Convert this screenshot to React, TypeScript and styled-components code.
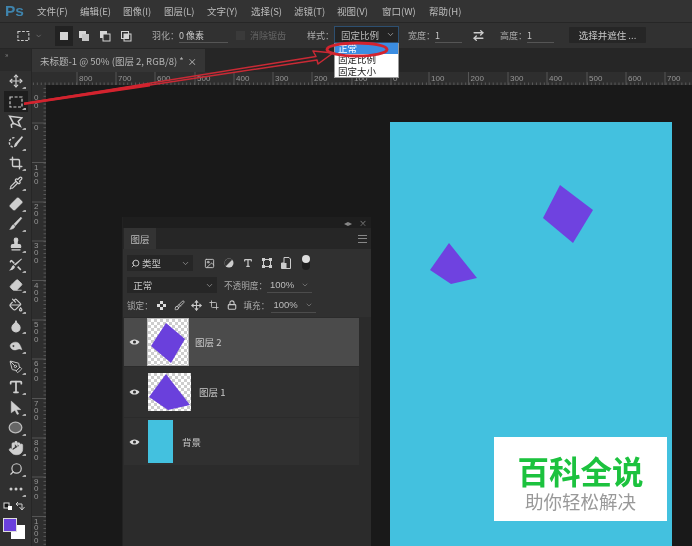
import React from "react";
import styled, { createGlobalStyle } from "styled-components";
import { Move, Crop, Pipette, Bandage, Brush, Stamp, Eraser, PaintBucket, Droplet, PenTool, Search, Hand, ChevronDown, Image, Type, Lock, ArrowRightLeft } from "lucide-react";

const Global = createGlobalStyle`
  html, body { margin: 0; padding: 0; background: #191919; }
  body { font-family: "Noto Sans CJK SC", "Liberation Sans", sans-serif; overflow: hidden; }
`;

const Page = styled.div`
  width: 692px; height: 546px; position: relative; overflow: hidden;
  display: flex; flex-direction: column; background: #191919; color: #c4c4c4; font-size: 10px;
  filter: blur(0.35px);
`;
const MenuBar = styled.div`
  height: 23px; flex: none; display: flex; align-items: center; background: #333; border-bottom: 1px solid #262626; box-sizing: border-box;
`;
const Logo = styled.div`
  width: 37px; padding-left: 5px; box-sizing: border-box; flex: none;
  font: bold 15.5px "Liberation Sans", sans-serif; color: #3f84ad;
`;
const MenuItem = styled.span<{ $w: number }>`
  width: ${p => p.$w}px; flex: none; font-size: 9.5px; color: #bdbdbd; white-space: nowrap;
`;
const Options = styled.div`
  height: 26px; flex: none; display: flex; align-items: center; background: #313131; border-bottom: 1px solid #262626; box-sizing: border-box; font-size: 9px;
`;
const OptIcon = styled.div<{ $w: number; $active?: boolean }>`
  width: ${p => p.$w}px; height: 20px; flex: none; display: flex; align-items: center; justify-content: center; gap: 5px;
  background: ${p => (p.$active ? "#222" : "transparent")};
`;
const OptLabel = styled.span<{ $w: number; $dim?: boolean }>`
  width: ${p => p.$w}px; flex: none; white-space: nowrap; color: ${p => (p.$dim ? "#666" : "#aaa")};
`;
const UnderValue = styled.span<{ $w: number }>`
  width: ${p => p.$w}px; flex: none; border-bottom: 1px solid #555; color: #c9c9c9; line-height: 13px; white-space: nowrap; box-sizing: border-box;
`;
const SelectBox = styled.div`
  width: 65px; height: 17px; flex: none; background: #232323; border: 1px solid #2d4f70; box-sizing: border-box; margin-top: -2px;
  display: flex; align-items: center; justify-content: space-between; padding: 0 3px 0 6px; color: #bbb; white-space: nowrap; font-size: 9.5px;
`;
const WideButton = styled.div`
  width: 77px; height: 16px; flex: none; background: #262626; display: flex; align-items: center; justify-content: center; color: #c8c8c8; border-radius: 1px; font-size: 9.5px; margin-top: -2px;
`;
const Gap = styled.div<{ $w: number }>` width: ${p => p.$w}px; flex: none; `;

const Main = styled.div` flex: 1; display: flex; min-height: 0; `;
const Tools = styled.div`
  width: 32px; flex: none; background: #303030; display: flex; flex-direction: column; align-items: center; border-right: 1px solid #262626; box-sizing: border-box;
`;
const Grip = styled.div`
  height: 22px; width: 100%; flex: none; font-size: 7px; line-height: 10px; color: #888; padding-left: 5px; box-sizing: border-box; letter-spacing: 1px; background: #2a2a2a;
`;
const Tool = styled.div<{ $active?: boolean }>`
  width: 24px; height: 20.4px; flex: none; display: flex; align-items: center; justify-content: center; position: relative; color: #cfcfcf;
  background: ${p => (p.$active ? "#1e1e1e" : "transparent")};
  &::after { content: ""; position: absolute; right: 2px; bottom: 2px; border-left: 2px solid transparent; border-bottom: 2px solid #aaa; border-right: 2px solid #aaa; }
`;
const ColorWell = styled.div` position: relative; width: 28px; height: 46px; flex: none; margin-top: 1px; margin-left: 1px; `;
const Fg = styled.div`
  position: absolute; left: 1px; top: 18px; width: 12px; height: 12px; background: #6a40dc; border: 1px solid #ddd; z-index: 1;
`;
const Bg = styled.div`
  position: absolute; left: 9px; top: 25px; width: 14px; height: 14px; background: #fff;
`;

const Work = styled.div` flex: 1; min-width: 0; display: flex; flex-direction: column; `;
const TabRow = styled.div` height: 23px; flex: none; background: #262626; display: flex; `;
const DocTab = styled.div`
  width: 173px; background: #353535; display: flex; align-items: center; justify-content: space-between; padding: 0 8px; box-sizing: border-box; color: #b5b5b5; font-size: 9.5px; white-space: nowrap;
`;
const RulerTop = styled.svg` height: 13px; width: 660px; flex: none; display: block; background: #2e2e2e; `;
const Body = styled.div` flex: 1; display: flex; min-height: 0; `;
const RulerLeft = styled.svg` width: 14px; flex: none; height: 461px; display: block; background: #2e2e2e; `;
const Canvas = styled.div` flex: 1; position: relative; background: #191919; overflow: hidden; `;
const Doc = styled.svg`
  position: absolute; left: 344px; top: 37px; width: 282px; height: 424px; display: block;
`;
const Watermark = styled.div`
  position: absolute; left: 448px; top: 352px; width: 173px; height: 84px; background: #fff;
  display: flex; flex-direction: column; align-items: center; box-sizing: border-box; padding-top: 15px;
`;
const WmTitle = styled.div`
  font-size: 31.5px; line-height: 37px; font-weight: 700; color: #1cc23e; white-space: nowrap;
`;
const WmSub = styled.div` font-size: 18.5px; line-height: 24px; color: #999; white-space: nowrap; `;

const Panel = styled.div`
  position: absolute; left: 122px; top: 217px; width: 249px; height: 329px; background: #2b2b2b; display: flex; flex-direction: column; border-left: 1px solid #222; box-sizing: border-box;
  z-index: 2;
`;
const PanelTop = styled.div`
  height: 11px; background: #1e1e1e; flex: none; display: flex; justify-content: flex-end; align-items: center; gap: 7px; padding-right: 4px; color: #888; font-size: 8px; line-height: 11px;
`;
const PanelTabs = styled.div`
  height: 21px; flex: none; background: #262626; display: flex; align-items: stretch; justify-content: space-between; padding: 0 4px 0 1px;
`;
const PanelTab = styled.div` width: 32px; background: #333; display: flex; align-items: center; justify-content: center; color: #bbb; font-size: 9.5px; `;
const Burger = styled.div`
  width: 9px; align-self: center; height: 6px; border-top: 1px solid #888; border-bottom: 1px solid #888; position: relative;
  &::after { content: ""; position: absolute; left: 0; right: 0; top: 2px; height: 1px; background: #888; }
`;
const PanelRow = styled.div<{ $h: number }>`
  height: ${p => p.$h}px; flex: none; display: flex; align-items: center; background: #303030; padding-left: 4px; box-sizing: border-box; color: #a9a9a9; font-size: 9.5px;
`;
const PanelLabel = styled.span<{ $w: number }>`
  width: ${p => p.$w}px; flex: none; font-size: 8.6px; white-space: nowrap;
`;
const PanelSelect = styled.div<{ $w: number }>`
  width: ${p => p.$w}px; height: 16px; flex: none; background: #262626; display: flex; align-items: center; justify-content: space-between; padding: 0 3px 0 4px; box-sizing: border-box; color: #c4c4c4; white-space: nowrap;
`;
const SelectLabel = styled.span` display: flex; align-items: center; gap: 2px; `;
const PanelIcon = styled.div<{ $w: number }>` width: ${p => p.$w}px; flex: none; display: flex; justify-content: center; align-items: center; color: #c8c8c8; `;
const Knob = styled.div`
  width: 8px; height: 13px; border-radius: 4px; background: #1d1d1d; position: relative;
  &::before { content: ""; position: absolute; top: -2px; left: 0; width: 8px; height: 8px; border-radius: 50%; background: #ddd; }
`;
const PctField = styled.div<{ $w: number }>`
  width: ${p => p.$w}px; flex: none; display: flex; justify-content: space-between; align-items: center; border-bottom: 1px solid #4c4c4c; color: #bdbdbd; font: 9.5px "Liberation Sans", sans-serif; line-height: 14px; padding: 0 3px 0 3px; box-sizing: border-box;
`;
const List = styled.div` display: flex; flex-direction: column; width: 235px; flex: none; margin: 1px 0 0 1px; gap: 1px; `;
const Row = styled.div<{ $h: number; $active?: boolean }>`
  height: ${p => p.$h}px; flex: none; display: flex; align-items: center; background: ${p => (p.$active ? "#4b4b4b" : "#303030")}; color: #c9c9c9; font-size: 9.5px;
`;
const Eye = styled.div` width: 24px; flex: none; display: flex; padding-left: 5px; box-sizing: border-box; `;
const ThumbSvg = styled.svg<{ $w: number; $h: number; $sel?: boolean }>`
  width: ${p => p.$w}px; height: ${p => p.$h}px; flex: none; display: block; background: #fff;
  outline: ${p => (p.$sel ? "1px solid #bbb" : "none")};
`;
const RowLabel = styled.span<{ $ml: number }>` margin-left: ${p => p.$ml}px; white-space: nowrap; `;

const Dropdown = styled.div`
  position: absolute; left: 334px; top: 43px; width: 65px; height: 35px; background: #fff; z-index: 3; color: #222; font-size: 9.5px; line-height: 11px; border: 1px solid #999; border-top: 0; box-sizing: border-box;
  display: flex; flex-direction: column;
`;
const DropItem = styled.div<{ $sel?: boolean }>`
  height: 11.5px; padding-left: 3px; white-space: nowrap; background: ${p => (p.$sel ? "#3b8de2" : "transparent")}; color: ${p => (p.$sel ? "#fff" : "#222")};
`;
const Annot = styled.svg` position: absolute; left: 0; top: 0; width: 692px; height: 546px; z-index: 4; pointer-events: none; `;

const menus: [string, number][] = [["文件(F)", 43], ["编辑(E)", 43], ["图像(I)", 41], ["图层(L)", 43], ["文字(Y)", 44], ["选择(S)", 43], ["滤镜(T)", 43], ["视图(V)", 45], ["窗口(W)", 47], ["帮助(H)", 40]];

const Marquee = () => (
  <svg width="14" height="12" viewBox="0 0 14 12"><rect x="1" y="1" width="12" height="10" fill="none" stroke="#ccc" strokeWidth="1.2" strokeDasharray="3 1.6" /></svg>
);
const sq = { fill: "#d5d5d5" };
const ModeIcon = ({ k }: { k: number }) => (
  <svg width="12" height="12" viewBox="0 0 12 12">
    {k === 0 && <rect x="2" y="2" width="8" height="8" {...sq} />}
    {k === 1 && <><rect x="1" y="1" width="7" height="7" {...sq} /><rect x="4" y="4" width="7" height="7" fill="#c4c4c4" /></>}
    {k === 2 && <><rect x="1" y="1" width="7" height="7" {...sq} /><rect x="4" y="4" width="7" height="7" fill="#313131" stroke="#d5d5d5" /></>}
    {k === 3 && <><rect x="1.5" y="1.5" width="7" height="7" fill="none" stroke="#d5d5d5" /><rect x="4" y="4" width="7" height="7" fill="none" stroke="#d5d5d5" /><rect x="4" y="4" width="4.5" height="4.5" {...sq} /></>}
  </svg>
);

const I = { size: 14, strokeWidth: 2 };
const CustomTool = ({ d, fill }: { d: string; fill?: boolean }) => (
  <svg width="15" height="15" viewBox="0 0 14 14"><path d={d} fill={fill ? "#cfcfcf" : "none"} stroke="#cfcfcf" strokeWidth={fill ? 0.4 : 1.4} /></svg>
);
const tools: React.ReactNode[] = [
  <Move {...I} strokeWidth={2} />,
  <Marquee />,
  <CustomTool d="M1.5 2 L13 3.5 L9.5 7 L11.5 11.5 L5 8.5 Z M5 8.5 L3 10 L3.5 13" />,
  <svg width="15" height="15" viewBox="0 0 14 14"><path d="M6 2.5 A4.5 4.5 0 1 0 5.5 11.5" fill="none" stroke="#cfcfcf" strokeWidth="1.3" strokeDasharray="2.2 1.3" /><path d="M13 1 L14 2 L9 8.5 C8.5 10.5 6.5 11.5 5.5 11.5 C6 10 6 8 7.5 7 Z" fill="#cfcfcf" /></svg>,
  <Crop {...I} strokeWidth={2.4} />,
  <Pipette {...I} />,
  <Bandage size={16} style={{ transform: "rotate(-45deg)" }} fill="#cfcfcf" stroke="#333" strokeWidth={1.2} />,
  <CustomTool fill d="M12 1 L13 2 L7 9 L5.5 7.5 Z M5 8 L6.5 9.5 C6 12 3 12.5 1.5 12.5 C3 11.5 3 9 5 8 Z" />,
  <Stamp {...I} fill="#cfcfcf" />,
  <svg width="15" height="15" viewBox="0 0 14 14"><path d="M12.5 1.5 L13 2 L7 8 L5.5 7 Z M5 7.5 L6.5 9 C6 11.5 3 12.5 1 12.5 C3 11.5 3 9 5 7.5 Z" fill="#cfcfcf" /><path d="M3 3 L6 6 M3 3 L2 5 M9 9 L12 12" stroke="#cfcfcf" strokeWidth="1.4" /></svg>,
  <Eraser {...I} fill="#cfcfcf" stroke="#cfcfcf" strokeWidth={1.4} />,
  <PaintBucket {...I} />,
  <Droplet {...I} fill="#cfcfcf" />,
  <CustomTool fill d="M2 6 C3 3 8 2 10 4 C11 5 12 7 13 10 C11 9 10 9 8 10 C5 11 2 9 2 6 Z M5 5.5 a1 1 0 1 0 .1 0 Z" />,
  <PenTool {...I} strokeWidth={1.6} />,
  <Type size={16} strokeWidth={2.6} />,
  <CustomTool fill d="M3 1 L12 9 L8 9 L10 13 L8.5 13.5 L6.5 9.5 L3 12 Z" />,
  <svg width="15" height="13" viewBox="0 0 15 13"><ellipse cx="7.5" cy="6.5" rx="6.3" ry="5.3" fill="#666" stroke="#bbb" strokeWidth="1.3" /></svg>,
  <Hand size={16} fill="#cfcfcf" stroke="#cfcfcf" strokeWidth={1} />,
  <Search size={14} strokeWidth={2} style={{ transform: "scaleX(-1)" }} />,
  <svg width="14" height="4" viewBox="0 0 14 4"><circle cx="2" cy="2" r="1.5" fill="#ccc"/><circle cx="7" cy="2" r="1.5" fill="#ccc"/><circle cx="12" cy="2" r="1.5" fill="#ccc"/></svg>,
];

const hLabels: [number, string][] = [[77, "800"], [116, "700"], [155, "600"], [195, "500"], [234, "400"], [273, "300"], [312, "200"], [352, "100"], [391, "0"], [429, "100"], [468.5, "200"], [508, "300"], [547, "400"], [587, "500"], [626, "600"], [665, "700"]];
const vLabels: [number, string][] = [[123, "0"], [162.5, "100"], [202, "200"], [241, "300"], [280.5, "400"], [320, "500"], [359, "600"], [398.5, "700"], [438, "800"], [477, "900"], [516.5, "1000"]];

const TopRuler = () => {
  const ticks: number[] = [];
  for (let x = 0; x < 660; x += 3.93) ticks.push(x + 1.4);
  return (
    <RulerTop viewBox="0 0 660 13">
      {ticks.map((x, i) => <line key={i} x1={x} x2={x} y1={10.5} y2={13} stroke="#777" strokeWidth=".6" />)}
      {hLabels.map(([x, t]) => (
        <g key={x + t}>
          <line x1={x - 32} x2={x - 32} y1={0} y2={13} stroke="#666" strokeWidth=".7" />
          <text x={x - 30} y={9} fontSize="8" fill="#969696" fontFamily="Liberation Sans">{t}</text>
        </g>
      ))}
    </RulerTop>
  );
};
const LeftRuler = () => {
  const ticks: number[] = [];
  for (let y = 0; y < 461; y += 3.93) ticks.push(y + 3.4);
  return (
    <RulerLeft viewBox="0 0 14 461">
      {ticks.map((y, i) => <line key={i} y1={y} y2={y} x1={11.5} x2={14} stroke="#777" strokeWidth=".6" />)}
      <text x="2" y="15" fontSize="8" fill="#969696" fontFamily="Liberation Sans">0</text>
      <text x="2" y="22.5" fontSize="8" fill="#969696" fontFamily="Liberation Sans">0</text>
      {vLabels.map(([y, t]) => (
        <g key={t}>
          <line x1={0} x2={14} y1={y - 85} y2={y - 85} stroke="#666" strokeWidth=".7" />
          {t.split("").map((c, i) => (
            <text key={i} x="2" y={y - 85 + 7 + i * (t.length > 3 ? 6.4 : 7.4)} fontSize="8" fill="#969696" fontFamily="Liberation Sans">{c}</text>
          ))}
        </g>
      ))}
    </RulerLeft>
  );
};

const EyeIcon = () => (
  <svg width="11" height="8" viewBox="0 0 11 8"><path d="M0.5 4 C2.5 .6 8.5 .6 10.5 4 C8.5 7.4 2.5 7.4 0.5 4 Z" fill="#ddd" /><circle cx="5.5" cy="4" r="1.6" fill="#333" /></svg>
);
const Checker = ({ id, w, h }: { id: string; w: number; h: number }) => (
  <>
    <defs>
      <pattern id={id} width="6" height="6" patternUnits="userSpaceOnUse">
        <rect width="6" height="6" fill="#fff" /><rect width="3" height="3" fill="#cdcdcd" /><rect x="3" y="3" width="3" height="3" fill="#cdcdcd" />
      </pattern>
    </defs>
    <rect width={w} height={h} fill={`url(#${id})`} />
  </>
);

export default function App() {
  return (
    <Page>
      <Global />
      <MenuBar>
        <Logo>Ps</Logo>
        {menus.map(([m, w]) => <MenuItem key={m} $w={w}>{m}</MenuItem>)}
      </MenuBar>
      <Options>
        <Gap $w={17} />
        <OptIcon $w={25}><Marquee /><ChevronDown size={8} color="#888" /></OptIcon>
        <Gap $w={13} />
        <OptIcon $w={18} $active><ModeIcon k={0} /></OptIcon>
        <OptIcon $w={22}><ModeIcon k={1} /></OptIcon>
        <OptIcon $w={20}><ModeIcon k={2} /></OptIcon>
        <OptIcon $w={21}><ModeIcon k={3} /></OptIcon>
        <Gap $w={16} />
        <OptLabel $w={27}>羽化：</OptLabel>
        <UnderValue $w={49}>0 像素</UnderValue>
        <Gap $w={5} />
        <OptIcon $w={15}><svg width="9" height="9"><rect width="9" height="9" fill="#3a3a3a" /></svg></OptIcon>
        <Gap $w={2} />
        <OptLabel $w={57} $dim>消除锯齿</OptLabel>
        <OptLabel $w={27}>样式：</OptLabel>
        <SelectBox>固定比例<ChevronDown size={9} color="#aaa" /></SelectBox>
        <Gap $w={9} />
        <OptLabel $w={27}>宽度：</OptLabel>
        <UnderValue $w={27}>1</UnderValue>
        <Gap $w={9} />
        <OptIcon $w={15}><ArrowRightLeft size={13} color="#ccc" strokeWidth={2.6} /></OptIcon>
        <Gap $w={14} />
        <OptLabel $w={27}>高度：</OptLabel>
        <UnderValue $w={27}>1</UnderValue>
        <Gap $w={15} />
        <WideButton>选择并遮住 ...</WideButton>
      </Options>
      <Main>
        <Tools>
          <Grip>»</Grip>
          {tools.map((t, i) => <Tool key={i} $active={i === 1}>{t}</Tool>)}
          <ColorWell>
            <svg width="28" height="14" viewBox="0 0 28 14"><rect x="2" y="3" width="5" height="5" fill="#111" stroke="#ddd" /><rect x="6" y="6" width="4" height="4" fill="#fff" /><path d="M14 4 H20 V9 M17.5 7 L20 10 L22.5 7 M14 4 L16 2 M14 4 L16 6" fill="none" stroke="#ccc" /></svg>
            <Bg />
            <Fg />
          </ColorWell>
        </Tools>
        <Work>
          <TabRow>
            <DocTab>未标题-1 @ 50% (图层 2, RGB/8) * <span>×</span></DocTab>
          </TabRow>
          <TopRuler />
          <Body>
            <LeftRuler />
            <Canvas>
              <Doc viewBox="0 0 282 424">
                <rect width="282" height="424" fill="#43c1df" />
                <polygon points="170,63 203,88 183,121 153,96" fill="#6f42e0" />
                <polygon points="59,121 87,156 61,162 40,148" fill="#6f42e0" />
              </Doc>
              <Watermark>
                <WmTitle>百科全说</WmTitle>
                <WmSub>助你轻松解决</WmSub>
              </Watermark>
            </Canvas>
          </Body>
        </Work>
      </Main>

      <Panel>
        <PanelTop><span>◂▸</span><span>×</span></PanelTop>
        <PanelTabs><PanelTab>图层</PanelTab><Burger /></PanelTabs>
        <PanelRow $h={28}>
          <PanelSelect $w={66}><SelectLabel><Search size={9} strokeWidth={2.6} style={{ transform: "scaleX(-1)" }} />类型</SelectLabel><ChevronDown size={9} color="#999" /></PanelSelect>
          <Gap $w={7} />
          <PanelIcon $w={19}><Image size={11} /></PanelIcon>
          <PanelIcon $w={19}><svg width="10" height="10" viewBox="0 0 10 10"><circle cx="5" cy="5" r="4.5" fill="#ccc" /><path d="M5 .5 A4.5 4.5 0 0 0 1.8 8.2 L8.2 1.8 A4.5 4.5 0 0 0 5 .5" fill="#333" /></svg></PanelIcon>
          <PanelIcon $w={19}><Type size={10} strokeWidth={3} /></PanelIcon>
          <PanelIcon $w={19}><svg width="10" height="10" viewBox="0 0 10 10"><rect x="1.5" y="1.5" width="7" height="7" fill="none" stroke="#ccc" /><path d="M0 0h3v3H0zM7 0h3v3H7zM0 7h3v3H0zM7 7h3v3H7z" fill="#ccc" /></svg></PanelIcon>
          <PanelIcon $w={19}><svg width="10" height="12" viewBox="0 0 10 12"><path d="M3 0.5H8L9.5 2V11.5H.5V6H3Z" fill="none" stroke="#ccc" /><rect x=".5" y="6" width="5" height="5.5" fill="#ccc" /></svg></PanelIcon>
          <PanelIcon $w={21}><Knob /></PanelIcon>
        </PanelRow>
        <PanelRow $h={16}>
          <PanelSelect $w={90}><span>&nbsp;正常</span><ChevronDown size={9} color="#999" /></PanelSelect>
          <Gap $w={7} />
          <PanelLabel $w={43}>不透明度：</PanelLabel>
          <PctField $w={45}>100%<ChevronDown size={8} color="#888" /></PctField>
        </PanelRow>
        <PanelRow $h={24}>
          <PanelLabel $w={26}>锁定：</PanelLabel>
          <PanelIcon $w={17.5}><svg width="9" height="9" viewBox="0 0 9 9"><rect width="9" height="9" fill="#ddd" /><path d="M0 0h3v3H0zM6 0h3v3H6zM3 3h3v3H3zM0 6h3v3H0zM6 6h3v3H6z" fill="#333" /></svg></PanelIcon>
          <PanelIcon $w={17.5}><Brush size={11} /></PanelIcon>
          <PanelIcon $w={17.5}><Move size={11} strokeWidth={2.4} /></PanelIcon>
          <PanelIcon $w={17.5}><Crop size={10} /></PanelIcon>
          <PanelIcon $w={17.5}><Lock size={10} strokeWidth={2.6} /></PanelIcon>
          <Gap $w={3} />
          <PanelLabel $w={27}>填充：</PanelLabel>
          <PctField $w={45}>100%<ChevronDown size={8} color="#888" /></PctField>
        </PanelRow>
        <List>
          <Row $h={48} $active>
            <Eye><EyeIcon /></Eye>
            <ThumbSvg $w={40} $h={46} $sel viewBox="0 0 40 46">
              <Checker id="c1" w={40} h={46} />
              <polygon points="18,4 37,20 23,44 3,27" fill="#6a40dc" />
            </ThumbSvg>
            <RowLabel $ml={7}>图层 2</RowLabel>
          </Row>
          <Row $h={50}>
            <Eye><EyeIcon /></Eye>
            <ThumbSvg $w={43} $h={38} viewBox="0 0 43 38">
              <Checker id="c2" w={43} h={38} />
              <polygon points="18,1 42,32 20,37 1,24" fill="#6a40dc" />
            </ThumbSvg>
            <RowLabel $ml={8}>图层 1</RowLabel>
          </Row>
          <Row $h={47}>
            <Eye><EyeIcon /></Eye>
            <ThumbSvg $w={25} $h={43} viewBox="0 0 25 43"><rect width="25" height="43" fill="#43c1df" /></ThumbSvg>
            <RowLabel $ml={9}>背景</RowLabel>
          </Row>
        </List>
      </Panel>

      <Dropdown>
        <DropItem $sel>正常</DropItem>
        <DropItem>固定比例</DropItem>
        <DropItem>固定大小</DropItem>
      </Dropdown>
      <Annot viewBox="0 0 692 546">
        <ellipse cx="357" cy="49.5" rx="30" ry="6.5" fill="none" stroke="#d3232e" strokeWidth="3" />
        <path d="M24 103.5 L316 56.5 L313 51 L333 53 L318 64 L317 60 L24 104" fill="none" stroke="#c92a35" strokeWidth="1.5" strokeLinejoin="round" />
        <polygon points="24,102.5 150,83 150,86.5 24,105" fill="#d3232e" />
      </Annot>
    </Page>
  );
}
